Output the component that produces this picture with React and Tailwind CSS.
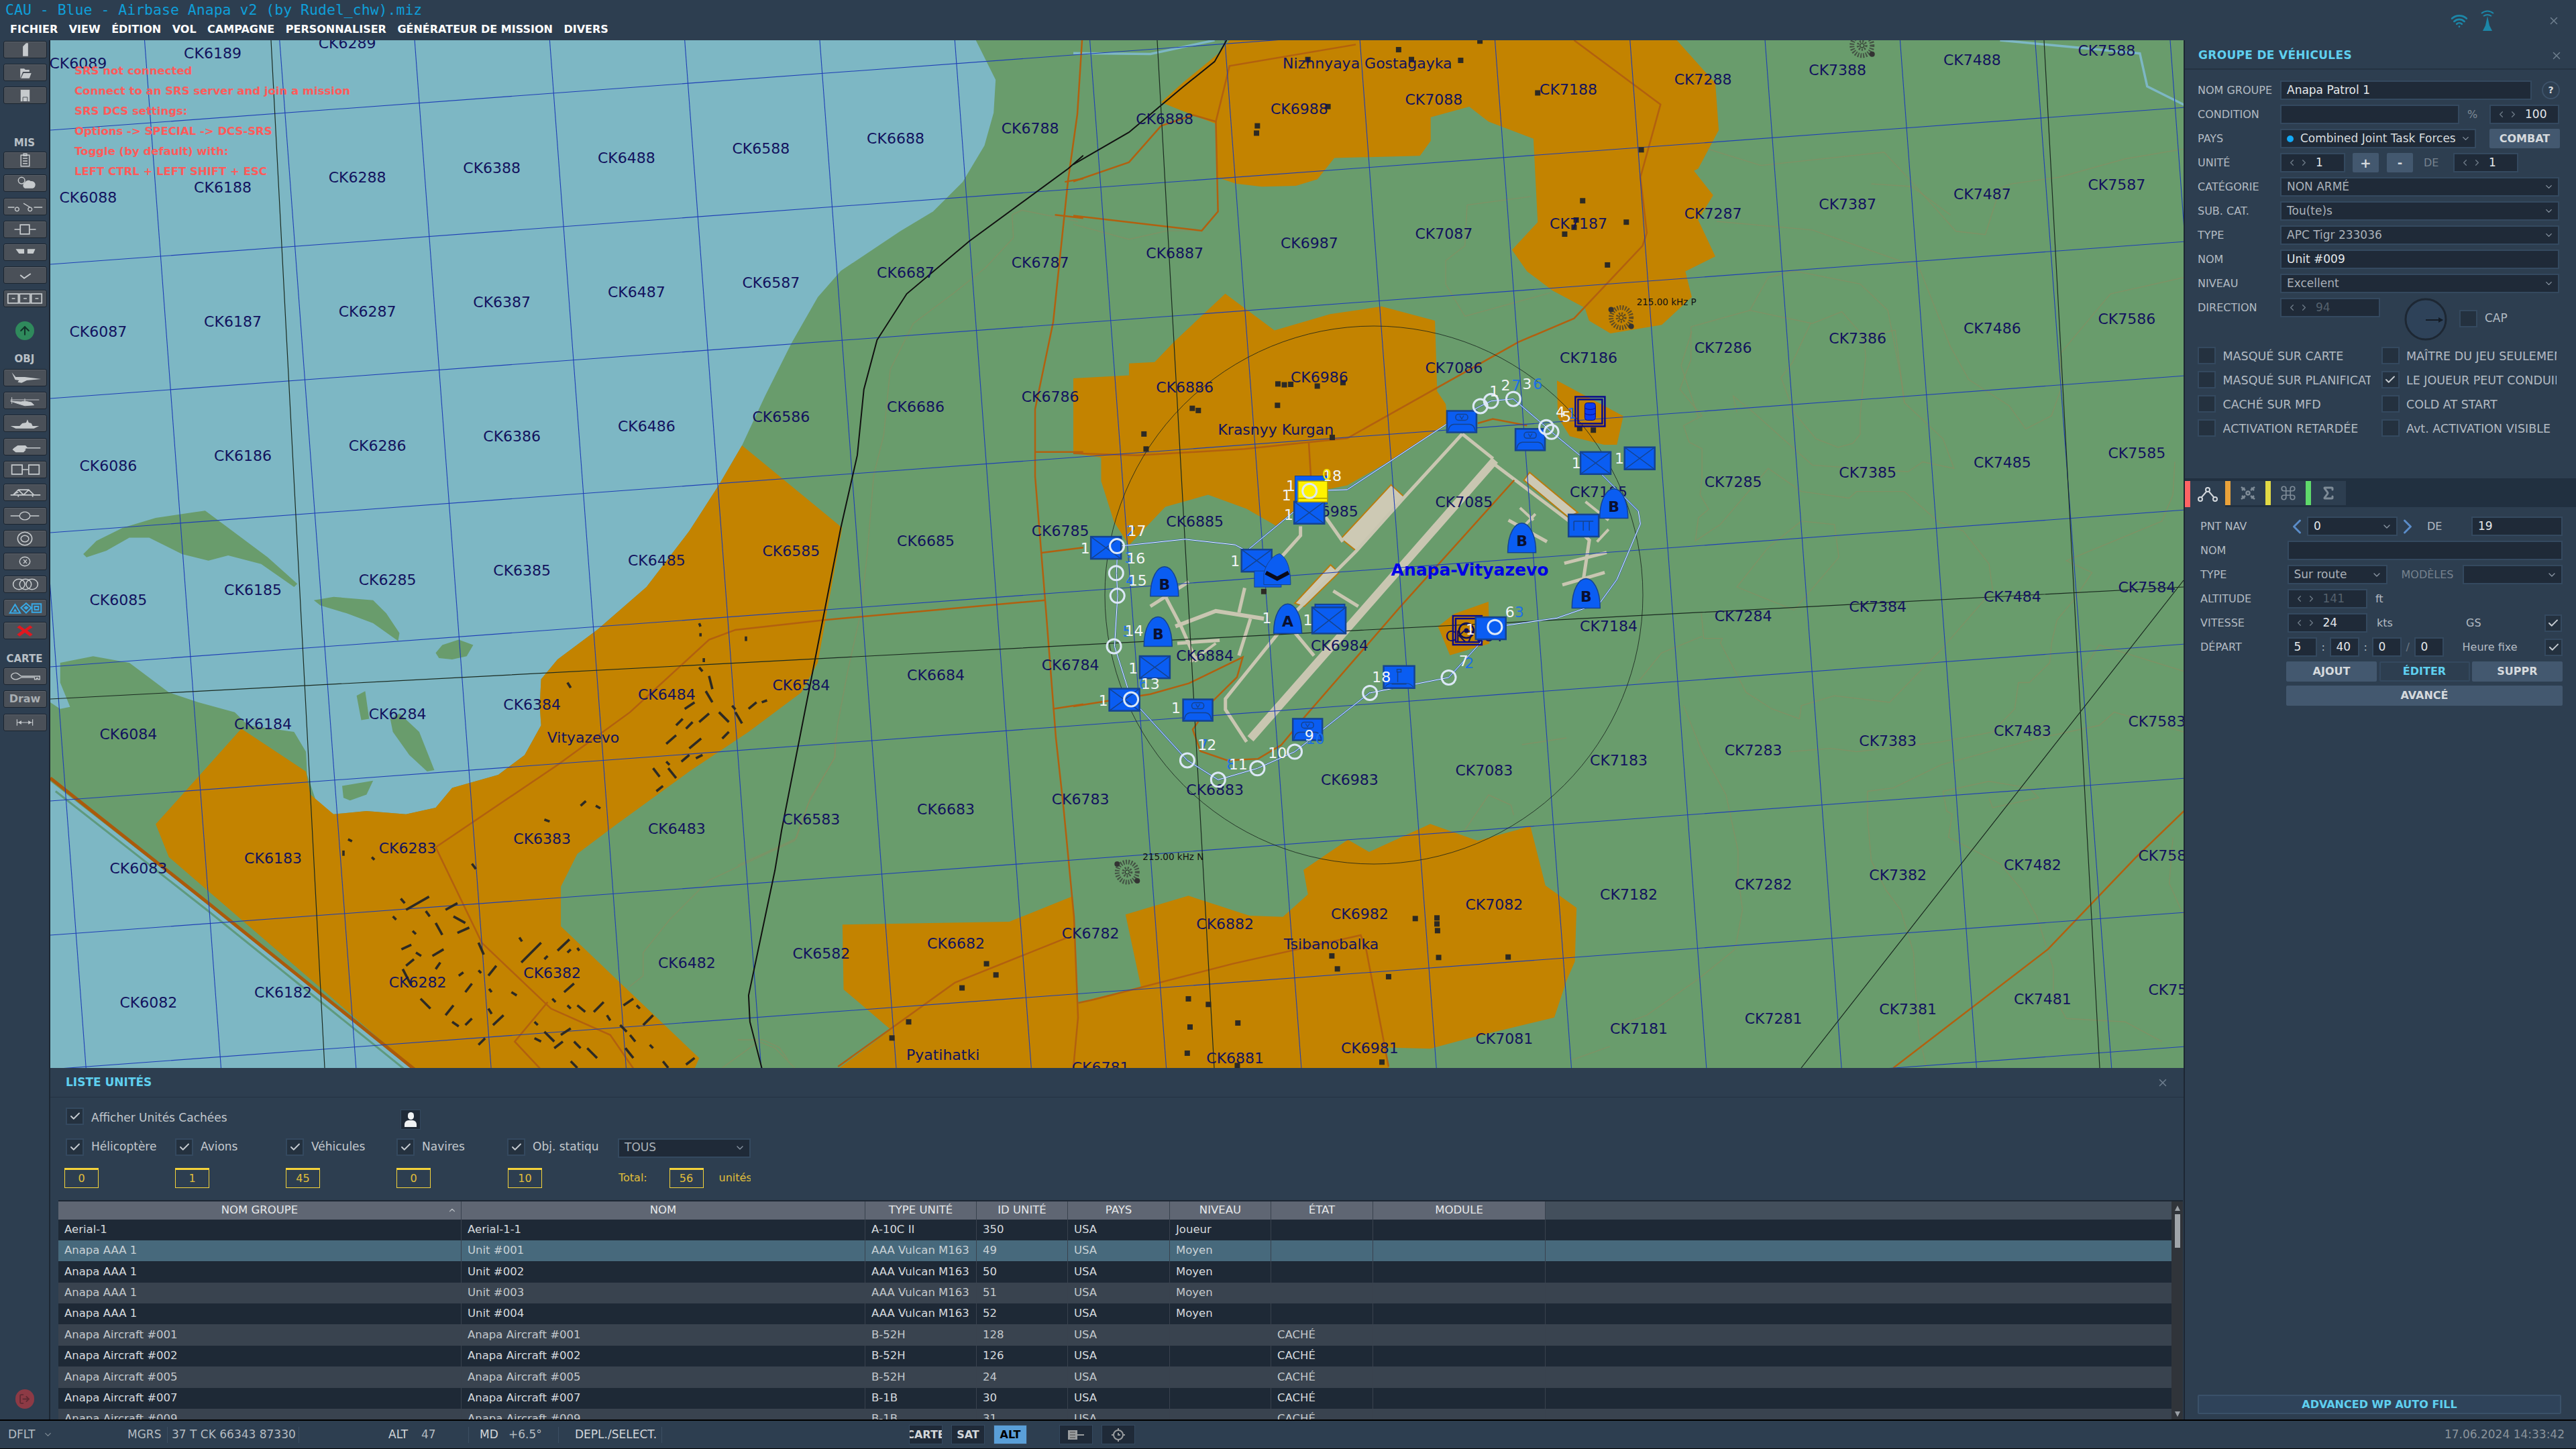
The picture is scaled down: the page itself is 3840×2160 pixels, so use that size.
import { Check, ChevronDown, ChevronLeft, ChevronRight, Command, Sigma, Wifi, X, ArrowUp, LogOut } from "lucide-react";

// zoom frames used to trace the map: [offsetX, offsetY, scaleX, scaleY]
const Z7 = [1600, 500, 0.574, 0.459];
const Z8 = [75, 60, 0.982, 0.982];
const Z9 = [1600, 60, 0.638, 0.638];
const Z10 = [1100, 1100, 0.829, 0.3333];
const Z11 = [2400, 60, 0.5485, 0.982];
const F = [0, 0, 1, 1];

const xy = (x, y, z) => [z[0] + x * z[2], z[1] + y * z[3]];
const P = (s, z) =>
  s
    .trim()
    .split(/\s+/)
    .map((p) => {
      const [x, y] = p.split(",").map(Number);
      return xy(x, y, z).join(",");
    })
    .join(" ");

const SEA = [
  ["0,0 1405,0 1435,60 1432,110 1418,160 1385,215 1340,260 1290,290 1200,350 1165,390 1125,460 1085,540 1050,615 1015,675 970,745 905,830 830,895 770,940 745,970 743,1010 745,1040 720,1085 680,1115 610,1135 585,1165 540,1175 480,1170 430,1175 405,1160 390,1115 388,1080 370,1050 300,1040 280,1020 225,1005 180,990 120,945 65,935 15,945 15,975 30,1012 15,1015 0,1005", Z8],
  ["0,1125 160,1250 240,1310 400,1440 560,1568 0,1568", Z8],
];
const ISLANDS = [
  "50,780 70,760 110,740 160,725 235,714 270,740 330,785 375,825 370,830 320,795 270,782 240,790 200,780 150,755 120,755 85,775 55,785",
  "400,850 430,845 490,850 510,870 530,900 528,912 490,885 450,870 410,858",
  "585,930 595,918 620,910 642,918 632,935 610,940 590,938",
  "465,995 478,988 484,1030 472,1032",
  "516,1030 530,1022 560,1050 583,1108 572,1110 545,1085 520,1050",
  "443,1132 490,1124 480,1145 455,1154 445,1150",
];
const ORANGE = [
  ["1050,615 1202,740 1165,945 1140,990 1060,1050 970,1110 860,1190 800,1235 775,1285 775,1345 985,1545 975,1568 560,1568 180,1240 160,1190 290,1045 388,1110 395,1145 430,1175 480,1170 540,1175 585,1165 610,1135 680,1115 720,1085 745,1040 743,1010 745,970 770,940 830,895 905,830 970,745 1015,675", Z8],
  ["188,835 488,822 602,708 612,1190 640,1165 725,1115 697,790 810,706 920,795 980,800 1025,700 1017,590 1097,455 1135,510 1245,385 1330,460 1425,395 1452,660 1508,760 1505,1000 1490,1085 1468,1250 1320,1340 1245,1390 1165,1385 1172,1500 170,1500 275,1305 190,1125", Z10],
  ["205,145 255,100 340,30 365,0 1410,0 1500,100 1508,210 1460,300 1450,305 1495,362 1460,420 1500,505 1430,540 1445,600 1375,665 1255,685 1205,655 1195,625 1120,585 1060,540 1025,490 1085,425 1075,230 970,190 925,155 835,180 835,235 810,270 610,275 570,325 520,340 440,342 380,335 335,320 333,195 280,175", Z9],
  ["0,790 130,783 130,755 190,752 235,705 355,592 470,678 600,640 720,622 845,655 850,820 870,850 875,895 745,980 640,1040 590,1050 520,1060 515,1100 475,1135 405,1095 315,1062 215,1090 130,1180 95,1125 65,1030 65,975 0,965", Z9],
  ["1130,795 1285,878 1270,945 1240,945 1160,925 1132,880", Z9],
  ["852,1370 890,1340 970,1312 972,1410 880,1437", Z9],
];
const CONTOURS = [
  ["265,165 410,190 745,170 820,215 940,290 1020,295 1060,225 1090,218 1220,208 1400,180 1560,165", Z11],
  ["710,218 820,222 925,265", Z11],
  ["290,275 550,288 840,345 925,465 975,515 1085,555 1130,590 1200,570 1225,530 1225,475 1300,425 1360,385 1560,360", Z11],
  ["220,435 220,485 190,530 250,570 200,585 215,610 250,620 250,665 245,690 268,712 240,725 232,760 300,735 430,650 520,685 650,695 670,685 800,685 890,730 960,745 1030,795 1040,835 900,925 760,1005 610,995 520,1010 515,1030 440,1015 370,990 300,915 305,908 255,908 248,870", Z11],
  ["430,360 380,410 220,435", Z11],
  ["380,410 550,430 630,412 690,450 775,440 800,550 905,605 935,650 850,640 810,655 550,645 390,565 335,540 345,565", Z11],
  ["430,360 500,350 680,370 755,410 790,510 800,550", Z11],
  ["545,430 495,490 465,512 500,565 560,605 620,618 660,612 680,598 680,570 695,480 690,450", Z11],
  ["520,730 610,735 622,785 500,865 345,830 430,770 520,730", Z11],
  ["200,1010 250,1080 315,1145 348,1230 348,1270 360,1320 340,1380 240,1425 100,1480 0,1500", Z11],
  ["490,1080 600,1075 670,1080 900,1065 1040,1050 1100,1015 1110,975 1140,975 1195,945 1200,915 1215,880 1260,850 1310,808 1240,790 1500,730 1530,690 1535,640", Z11],
  ["700,1140 700,1180 710,1245 750,1290 790,1320 825,1385 830,1440 840,1510 860,1560", Z11],
  ["700,1140 770,1135 900,1100 1160,1060 1330,1040 1370,1020 1560,1050", Z11],
  ["905,1140 1030,1125 1140,1135 1165,1150 1040,1165 1030,1150", Z11],
  ["905,1140 915,1170 930,1175 920,1210 1060,1250 1120,1290 1160,1330 1205,1410 1205,1450 1240,1485 1400,1490 1500,1520", Z11],
  ["1270,970 1330,918 1560,958", Z11],
  ["1530,1210 1520,1280 1560,1330", Z11],
  ["75,975 140,930 250,905", Z11],
  ["1460,265 1475,258 1560,275", Z8],
  ["1460,265 1462,300 1420,345 1370,385 1310,430 1275,500 1265,600 1250,660 1240,780 1230,870 1210,960 1195,1040 1190,1090 1150,1160 1130,1215 1000,1275 940,1335 900,1385 900,1420 875,1440", Z8],
  ["1020,1560 1075,1520 1100,1530 1130,1560", Z8],
  ["920,385 1070,365", Z9],
  ["920,385 915,480 870,515 870,570 915,645 1115,590", Z9],
  ["0,430 130,465 220,445 300,445", Z9],
  ["1445,680 1420,760 1460,880", Z9],
  ["175,0 175,85 130,270 105,450 0,570", Z10],
  ["1410,30 1490,0", Z10],
  ["1305,420 1350,255 1390,300 1395,345", Z10],
  ["1500,1440 1568,1380", Z10],
  ["0,1350 45,1350 75,1385 90,1440", Z10],
];
const ROADS = [
  ["1613,60 1606,170 1592,270 1570,480 1543,610 1543,710 1558,895 1574,1100 1585,1200 1601,1367 1607,1517 1600,1592", F],
  ["585,1225 770,1100 880,1020 1000,910 1040,895 1175,880 1510,850", Z8],
  ["585,1225 655,1370 760,1470 850,1510 890,1568", Z8],
  ["755,1460 705,1520 750,1568", Z8],
  ["180,1470 390,1095 590,895", Z10],
  ["612,1185 640,1170 890,1010 1120,882 1130,950 1170,1470", Z10],
  ["0,965 150,970 400,955 640,930 1040,705 1170,650 1330,480 1340,450 1325,320 1372,150 1170,0", Z9],
  ["0,330 130,285 205,200 280,175 333,190 365,60 660,10", Z9],
  ["333,190 338,400 300,445 0,410", Z9],
  ["550,940 555,1020", Z9],
  ["945,895 980,885 1060,900", Z9],
  ["1145,470 850,880 600,1240 540,1330 480,1375 400,1380 330,1350 310,1280 360,1190 425,1110 440,1045 300,1130 200,1165 0,1205", Z7],
  ["1495,625 1568,625", Z8],
  ["1505,778 1568,770", Z8],
  ["1522,1015 1568,1008", Z8],
  ["1525,265 1568,270", Z8],
  ["1540,215 1568,210", Z8],
  ["770,1560 1190,1380 1310,1310 1430,1240 1560,1170", Z11],
];
const BUILDINGS8 =
  "985,885 987,890;987,900 987,905;1056,905 1056,912;992,938 992,944;785,975 790,983;985,952 990,958;1000,965 1005,985;995,988 1005,1005;963,1015 978,1005;1015,1020 1030,1035;1040,1020 1050,1037;1000,1022 985,1035;1060,1015 1072,1005;1080,1005 1088,1002;950,1040 960,1030;935,1068 950,1055;965,1045 975,1035;970,1075 988,1060;1020,1060 1030,1050;915,1105 925,1118;938,1105 950,1120;935,1095 940,1100;958,1095 970,1085;980,1090 990,1085;920,1140 930,1132;805,1162 813,1155;828,1162 835,1166;750,1183 758,1186;445,1230 445,1238;452,1213 458,1216;488,1240 492,1244;640,1250 646,1258;1035,1010 1040,1016;532,1303 538,1310;540,1320 575,1300;600,1320 618,1310;520,1330 525,1335;570,1322 576,1330;612,1330 630,1340;585,1340 595,1358;618,1355 636,1347;550,1352 555,1357;533,1380 548,1373;580,1390 597,1380;555,1385 563,1390;650,1370 658,1388;585,1410 592,1400;540,1405 552,1395;535,1410 548,1435;620,1420 627,1415;650,1412 654,1416;665,1420 677,1405;630,1445 640,1432;666,1440 670,1445;600,1480 612,1465;562,1455 577,1470;665,1470 670,1478;610,1490 620,1497;630,1495 640,1485;650,1525 660,1515;672,1495 688,1480;700,1445 708,1450;712,1362 716,1368;715,1400 745,1370;750,1395 755,1390;770,1382 788,1365;785,1385 790,1380;800,1378 803,1382;762,1455 767,1460;780,1445 795,1432;785,1465 790,1470;800,1465 812,1475;825,1475 840,1460;845,1480 850,1488;870,1465 885,1455;890,1465 895,1470;900,1495 915,1480;865,1495 875,1505;880,1510 888,1520;873,1530 885,1545;910,1525 915,1530;930,1550 938,1560;965,1555 978,1545;735,1490 740,1495;750,1505 765,1520;775,1510 790,1500;765,1530 778,1520;795,1520 805,1530;815,1530 830,1545;735,1515 745,1520;790,1550 800,1560";
const BLOCKS = [
  [Z9, "760,22 950,2 905,47 790,45 548,45 595,155 430,200 428,217 1085,123 1327,256 1190,375 1175,420 1170,437 1148,453 1292,425 1248,525 478,803 493,805 508,804 570,808 630,800 477,853 278,860 292,865 165,920 170,955 605,928 1183,907 1215,911 445,1288"],
  [Z10, "447,1010 464,1060 403,1118 307,1270 277,1342 1068,975 1078,1033 1218,808 1257,805 1257,832 1258,862 1260,982 1385,980 1170,1068 810,1167 846,1192 813,1293 899,1275 808,1410 898,1465 1158,1450"],
];
const AIRFIELD = [
  ["1095,405 460,1310", 12],
  ["1010,320 1090,400", 5],
  ["1010,320 860,525 735,700 575,900 395,1180 395,1215 450,1320", 5],
  ["1095,420 1190,510 1285,600 1340,665 1325,790", 5],
  ["590,620 590,650 540,720", 5],
  ["655,590 700,670", 5],
  ["495,920 370,895 265,945", 6],
  ["445,820 430,900", 5],
  ["240,850 280,945 320,1060", 5],
  ["200,880 300,800", 5],
  ["460,920 430,1040", 5],
  ["270,1000 380,990", 5],
  ["305,1060 370,1000", 4],
  ["675,830 740,880", 5],
  ["575,965 625,1040", 5],
  ["1130,600 1230,670", 5],
  ["1160,560 1195,600", 4],
  ["1170,620 1200,580", 4],
  ["1275,740 1385,705", 5],
  ["1270,810 1380,770", 5],
  ["1330,540 1390,600", 4],
  ["1360,670 1390,630", 4],
];
const APRONS = [
  "825,485 860,525 735,700 695,660",
  "668,745 690,770 600,880 575,870",
  "1185,445 1310,575 1285,590 1170,470",
];
const ROUTE9 = "552,1053 640,1050 875,895 951,855 976,843 1028,838 1105,904 1117,915 1220,1000 1320,1100 1325,1130 1270,1260 1230,1315 1130,1350 985,1371 877,1489 693,1525";
const ROUTE7 = "770,1160 575,1352 478,1406 376,1443 296,1380 150,1180 107,1010 115,845 112,772 115,685 290,662 420,680 450,700 575,570 615,505";
const WAYPOINTS = [
  [Z9, "951,855 976,843 1028,838 1105,904 1117,915 102,1182 100,1245 103,1298 95,1416 135,1540 552,1053 985,1371 877,1489 693,1525"],
  [Z7, "296,1380 376,1443 478,1406 575,1352"],
];
const WHITE_NUMS = [
  ["17", 148, 1146, Z9], ["16", 146, 1210, Z9], ["15", 150, 1262, Z9], ["14", 142, 1380, Z9], ["13", 180, 1503, Z9],
  ["1", 28, 1187, Z9], ["1", 378, 1216, Z9], ["1", 503, 1108, Z9], ["1", 498, 1062, Z9], ["1", 508, 1040, Z9], ["1", 452, 1350, Z9],
  ["1", 548, 1355, Z9], ["1", 928, 1376, Z9], ["1", 1175, 988, Z9], ["1", 1276, 977, Z9], ["1", 140, 1467, Z9], ["1", 70, 1542, Z9], ["1", 240, 1560, Z9],
  ["12", 347, 1328, Z7], ["11", 428, 1393, Z7], ["10", 530, 1355, Z7], ["9", 613, 1298, Z7], ["18", 800, 1108, Z7], ["18", 605, 1017, Z9],
  ["7", 912, 1450, Z9], ["6", 1020, 1335, Z9], ["1", 983, 820, Z9], ["2", 1010, 805, Z9], ["3", 1060, 803, Z9], ["4", 1138, 868, Z9], ["5", 1152, 880, Z9],
];
const BLUE_NUMS = [
  ["2", 925, 1455, Z9], ["3", 1042, 1335, Z9], ["7", 1035, 805, Z9], ["6", 1085, 803, Z9], ["1", 1165, 872, Z9],
  ["8", 410, 1393, Z7], ["7", 338, 1328, Z7], ["10", 628, 1310, Z7], ["2", 150, 635, Z7], ["3", 145, 722, Z7], ["4", 148, 795, Z7], ["5", 140, 960, Z7], ["6", 182, 1130, Z7],
];

const gridLabel = (e, n) => ({
  text: `CK${e}${n}`,
  x: 332 + (e - 61) * 200.6 + (88 - n) * 15,
  y: 279 - (e - 61) * 14.6 + (88 - n) * 200,
});
const GRID_LABELS = [];
for (let e = 60; e <= 76; e++)
  for (let n = 81; n <= 89; n++) {
    const l = gridLabel(e, n);
    // only squares that reach into the visible map
    if (l.x > 30 && l.x < 3300 && l.y > 45 && l.y < 1602) GRID_LABELS.push(l);
  }
const V_LINES = Array.from({ length: 17 }, (_, i) => 215.5 + 201.3 * (i - 1));
const H_LINES = Array.from({ length: 10 }, (_, j) => 194 + 200 * (j - 1) + 0);

const BLUE = "#0a5df2";
const DARK = "#15438f";

const BoxX = ({ x, y, z = Z9, w = 45, h = 33 }) => {
  const [a, b] = xy(x, y, z);
  return (
    <g transform={`translate(${a} ${b})`}>
      <rect width={w} height={h} fill={BLUE} stroke={DARK} strokeWidth="2.5" />
      <path d={`M0 0L${w} ${h}M${w} 0L0 ${h}`} stroke={DARK} strokeWidth="1.5" />
    </g>
  );
};
const BoxV = ({ x, y, z = Z9 }) => {
  const [a, b] = xy(x, y, z);
  return (
    <g transform={`translate(${a} ${b})`}>
      <rect width="44" height="32" fill={BLUE} stroke={DARK} strokeWidth="2.5" />
      <rect x="13" y="5" width="18" height="9" rx="4" fill="none" stroke={DARK} strokeWidth="1.5" />
      <path d="M19 7l3 5 3-5" fill="none" stroke={DARK} strokeWidth="1.2" />
      <path d="M2 30q1-9 8-10h24q7 1 8 10" fill="none" stroke={DARK} strokeWidth="1.5" />
    </g>
  );
};
const Dome = ({ x, y, letter }) => {
  const [a, b] = xy(x, y, Z9);
  return (
    <g transform={`translate(${a} ${b})`}>
      <path d="M0 44C0 15 11 0 21 0S42 15 42 44Z" fill={BLUE} stroke={DARK} strokeWidth="1.5" />
      <text x="21" y="34" textAnchor="middle" fontSize="22" fontWeight="700" fill="#0a1030">{letter}</text>
    </g>
  );
};
const Ndb = ({ x, y, z, label }) => {
  const [a, b] = xy(x, y, z);
  return (
    <g transform={`translate(${a} ${b})`}>
      <circle r="15" fill="none" stroke="#333" strokeWidth="7" strokeDasharray="2 2" opacity=".7" />
      <circle r="6" fill="none" stroke="#333" strokeWidth="4" strokeDasharray="2 2" opacity=".7" />
      <circle r="3" fill="none" stroke="#222" strokeWidth="1" />
      <circle cx="-15" cy="-12" r="4" fill="#333" />
      <circle cx="15" cy="13" r="4" fill="#333" />
      {label && <text x="23" y="-18" fontSize="13.5" fill="#111">{label}</text>}
    </g>
  );
};

const MapDrawing = () => (
  <svg viewBox="75 60 3180 1532" className="block w-full h-full">
    <rect x="75" y="60" width="3180" height="1532" fill="#699c6c" />
    {SEA.map(([s, z], i) => <polygon key={i} points={P(s, z)} fill="#7db7c4" />)}
    {ISLANDS.map((s, i) => <polygon key={i} points={P(s, Z8)} fill="#699c6c" />)}
    {ORANGE.map(([s, z], i) => <polygon key={i} points={P(s, z)} fill="#c38300" />)}
    {CONTOURS.map(([s, z], i) => <polyline key={i} points={P(s, z)} fill="none" stroke="#8d8a60" strokeWidth="1.4" opacity=".6" />)}
    {/* rivers */}
    <polyline points={P("0,30 180,32 330,0", Z9)} fill="none" stroke="#7db7c4" strokeWidth="3.5" />
    <polyline points={P("1060,0 1440,20 1460,70 1560,98", Z11)} fill="none" stroke="#7db7c4" strokeWidth="3.5" />
    {/* airfield */}
    {APRONS.map((s, i) => <polygon key={i} points={P(s, Z7)} fill="#cdc9b4" stroke="#b87c10" strokeWidth="2" />)}
    {AIRFIELD.map(([s, w], i) => <polyline key={i} points={P(s, Z7)} fill="none" stroke="#c9c6b1" strokeWidth={w} />)}
    {/* roads */}
    {ROADS.map(([s, z], i) => <polyline key={i} points={P(s, z)} fill="none" stroke="#b2600f" strokeWidth="2.5" />)}
    <polyline points={P("8,1140 240,1322 545,1568", Z8)} fill="none" stroke="#5f9a7e" strokeWidth="3" />
    <polyline points={P("0,1120 240,1310 560,1568", Z8)} fill="none" stroke="#ab5a0a" strokeWidth="5" />
    {V_LINES.map((x, i) => <line key={i} x1={x} y1="60" x2={x + 114} y2="1592" stroke="#1e3fb5" strokeWidth="1.1" />)}
    {H_LINES.map((y, j) => <line key={j} x1="75" y1={y} x2="3255" y2={y - 233.7} stroke="#1e3fb5" strokeWidth="1.1" />)}
    {/* rail and zone lines */}
    <polyline points={P("1082,1568 1062,1490 1060,1450 1100,1260 1110,1200 1200,740 1225,630 1235,530 1255,455 1300,385 1395,305 1545,195 1568,175", Z8)} fill="none" stroke="#111" strokeWidth="2" />
    <polyline points={P("0,290 130,215 255,110 330,50 358,0", Z9)} fill="none" stroke="#111" strokeWidth="2" />
    <path d="M404 60L484 1592M1725 60L1810 1592M3047 60L3130 1592M75 1042L3255 875M2685 1592L3255 865" stroke="#1a2a20" strokeWidth="1.2" />
    <circle cx="2048" cy="887" r="401" fill="none" stroke="#15201a" strokeWidth="0.8" />
    {/* buildings */}
    {BUILDINGS8.split(";").map((s, i) => {
      const [p, q] = s.split(" ");
      return <polyline key={i} points={P(`${p} ${q}`, Z8)} fill="none" stroke="#2c2a24" strokeWidth="3.6" />;
    })}
    {BLOCKS.map(([z, s], i) =>
      s.split(" ").map((p, k) => {
        const [x, y] = p.split(",").map(Number);
        const [a, b] = xy(x, y, z);
        return <rect key={`${i}-${k}`} x={a - 4} y={b - 4} width="8" height="8" fill="#2c2a24" />;
      })
    )}
    {GRID_LABELS.map((l) => (
      <text key={l.text} x={l.x} y={l.y + 8} textAnchor="middle" fontSize="22" fill="#12125e">{l.text}</text>
    ))}
    {[
      ["Nizhnyaya Gostagayka", 687, 66, Z9],
      ["Krasnyy Kurgan", 473, 922, Z9],
      ["Vityazevo", 809, 1066, Z8],
      ["Pyatihatki", 1355, 1548, Z8],
      ["Tsibanobalka", 1067, 945, Z10],
    ].map(([t, x, y, z]) => {
      const [a, b] = xy(x, y, z);
      return <text key={t} x={a} y={b} textAnchor="middle" fontSize="22" fill="#12125e">{t}</text>;
    })}
    <text x="2191" y="858" textAnchor="middle" fontSize="25" fontWeight="700" fill="#0000e6">Anapa-Vityazevo</text>
    <Ndb x={1280} y={648} z={Z9} label="215.00 kHz P" />
    <Ndb x={700} y={600} z={Z10} label="215.00 kHz N" />
    <Ndb x={685} y={8} z={Z11} />
    {/* route */}
    <polyline points={`${P(ROUTE9, Z9)} ${P(ROUTE7, Z7)}`} fill="none" stroke="#1d57c8" strokeWidth="2" />
    <polyline points={`${P(ROUTE9, Z9)} ${P(ROUTE7, Z7)}`} fill="none" stroke="#fff" strokeWidth="1" />
    {/* units */}
    <BoxX x={41} y={1160} />
    <BoxX x={393} y={1190} />
    <rect {...{ x: 1600 + 518 * 0.638, y: 60 + 1018 * 0.638, width: 48, height: 42, fill: BLUE, stroke: DARK }} />
    <BoxX x={516} y={1078} />
    <BoxX x={1185} y={962} />
    <BoxX x={1288} y={951} />
    <BoxX x={155} y={1439} />
    <BoxX x={84} y={1515} />
    <rect x={1600 + 565 * 0.638} y={60 + 1318 * 0.638} width="44" height="20" fill={BLUE} stroke={DARK} strokeWidth="2" />
    <BoxX x={558} y={1325} w={50} h={39} />
    <BoxV x={873} y={866} />
    <BoxV x={1033} y={908} />
    <BoxV x={285} y={1182} z={Z7} />
    <BoxV x={570} y={1245} z={Z7} />
    <g transform={`translate(${1600 + 1157 * 0.638} ${60 + 1108 * 0.638})`}>
      <rect width="45" height="33" fill={BLUE} stroke={DARK} strokeWidth="2.5" />
      <path d="M8 10H37M8 10V24M22 10V24M31 10V24" fill="none" stroke={DARK} strokeWidth="1.5" />
    </g>
    <g transform={`translate(${1600 + 725 * 0.638} ${60 + 1462 * 0.638})`}>
      <rect width="46" height="33" fill={BLUE} stroke={DARK} strokeWidth="2.5" />
      <path d="M20 5h6v4h-6zM21 9v15M12 27h22" fill="none" stroke={DARK} strokeWidth="1.5" />
      <path d="M2 31q4-5 10-5h22q6 0 10 5" fill="none" stroke={DARK} strokeWidth="1.2" />
    </g>
    <Dome x={1015} y={1128} letter="B" />
    <Dome x={1230} y={1048} letter="B" />
    <Dome x={1165} y={1258} letter="B" />
    <Dome x={180} y={1230} letter="B" />
    <Dome x={165} y={1347} letter="B" />
    <Dome x={468} y={1317} letter="A" />
    <rect x={1600 + 423 * 0.638} y={60 + 1240 * 0.638} width="40" height="24" fill={BLUE} stroke={DARK} />
    <g transform={`translate(${1600 + 445 * 0.638} ${60 + 1200 * 0.638})`}>
      <path d="M0 46V30C4 10 18 0 24 0C34 6 40 20 40 46Z" fill={BLUE} stroke={DARK} />
      <path d="M3 28l17 9 17-9" fill="none" stroke="#0a0a1a" strokeWidth="6" />
    </g>
    <rect x={1600 + 525 * 0.638} y={60 + 1030 * 0.638} width="44" height="31" fill="#fff200" stroke="#b09c00" strokeWidth="1.5" />
    <line x1={1600 + 525 * 0.638} y1={60 + 1070 * 0.638} x2={1600 + 593 * 0.638} y2={60 + 1070 * 0.638} stroke="#b09c00" strokeWidth="1.5" />
    {/* fuel depot */}
    <g transform={`translate(${1600 + 1173 * 0.638} ${60 + 833 * 0.638})`}>
      <rect width="44" height="44" fill="none" stroke="#0a0a8c" strokeWidth="2.5" />
      <rect x="4" y="4" width="36" height="36" fill="none" stroke="#0a0a8c" strokeWidth="2.5" />
      <rect x="14" y="9" width="16" height="26" rx="4" fill="#0a3cf0" stroke="#0a0a8c" strokeWidth="1" />
      <path d="M14 17q8 4 16 0M14 25q8 4 16 0" fill="none" stroke="#0a0a8c" strokeWidth="1" />
    </g>
    <g transform={`translate(${1600 + 887 * 0.638} ${60 + 1345 * 0.638})`}>
      <rect width="43" height="43" fill="none" stroke="#0a0a8c" strokeWidth="2.5" />
      <rect x="4" y="4" width="35" height="35" fill="none" stroke="#0a0a8c" strokeWidth="2.5" />
      <circle cx="20" cy="22" r="11" fill="none" stroke="#0a0a5c" strokeWidth="2.5" />
      <circle cx="20" cy="22" r="3.5" fill="#0a0a5c" />
    </g>
    <rect x={1600 + 940 * 0.638} y={60 + 1348 * 0.638} width="45" height="33" fill={BLUE} stroke={DARK} strokeWidth="2.5" />
    {/* waypoints */}
    {WAYPOINTS.map(([z, s], i) =>
      s.split(" ").map((p, k) => {
        const [x, y] = p.split(",").map(Number);
        const [a, b] = xy(x, y, z);
        return <circle key={`${i}-${k}`} cx={a} cy={b} r="10.5" fill="none" stroke="#dce8f7" strokeWidth="3" />;
      })
    )}
    {BLUE_NUMS.map(([t, x, y, z], i) => {
      const [a, b] = xy(x, y, z);
      return <text key={i} x={a} y={b + 8} textAnchor="middle" fontSize="22" fill="#1d6fe8">{t}</text>;
    })}
    {WHITE_NUMS.map(([t, x, y, z], i) => {
      const [a, b] = xy(x, y, z);
      return <text key={i} x={a} y={b + 8} textAnchor="middle" fontSize="22" fill="#f2f5f7">{t}</text>;
    })}
    <text x={1600 + 592 * 0.638} y={60 + 1027 * 0.638} textAnchor="middle" fontSize="22" fill="#f5e400">0</text>
  </svg>
);

const TOOL_ICONS = {
  clip: <path d="M26 5h13v17H26zM30 3h5v3h-5zM29 10h7M29 14h7M29 18h7" fill="none" stroke="currentColor" strokeWidth="1.5" />,
  cloud: <g><circle cx="27" cy="9" r="5" fill="none" stroke="currentColor" strokeWidth="1.5" /><path d="M32 21a5 5 0 0 1 0-9 6 6 0 0 1 9-2 5 5 0 0 1 3 11z" fill="currentColor" /></g>,
  switch: <path d="M6 14h10M24 14h0M20 14a3 3 0 1 0 .01 0M30 8l10 6M40 14a3 3 0 1 0 .01 0M46 14h13" fill="none" stroke="currentColor" strokeWidth="1.4" />,
  waypoint: <path d="M16 13h8M25 6h14v14H25zM40 13h9" fill="none" stroke="currentColor" strokeWidth="1.8" />,
  flags: <path d="M18 8h13v7h-8zM34 6v16M30 6v16M36 8h12l-3 7h-9z" fill="currentColor" />,
  check: <path d="M25 13l6 5 10-7" fill="none" stroke="currentColor" strokeWidth="2" />,
  triple: <path d="M6 6h16v14H6zM24 6h16v14H24zM42 6h16v14H42zM12 13h5M30 13h5M48 13h5" fill="none" stroke="currentColor" strokeWidth="1.8" />,
  plane: <path d="M12 5l6 7h14l25 3-22 2-8 4-6-1 2-3-6-1z" fill="currentColor" />,
  helo: <path d="M10 12h44M32 10v4M12 8v10M10 14l16 1 6-1 10 2 4 4-14 1-10-3z" fill="currentColor" stroke="currentColor" strokeWidth="1" />,
  ship: <path d="M10 17h44l-8 4H18zM24 17l4-4 6-1 2-5 2 5 4 1 2 4z" fill="currentColor" />,
  tank: <path d="M15 15l6-4h12l3 3h20v1.5H34l-2 2h2l-4 4H18l-5-4z" fill="currentColor" />,
  sam: <path d="M12 6h16v14H12zM28 13h10M38 6h16v14H38z" fill="none" stroke="currentColor" strokeWidth="1.8" />,
  bridge: <path d="M10 17h46M14 17l8-8 8 8 8-8 8 8M22 9h16M14 17l4-3 4-1M22 20v-3M44 20v-3" fill="none" stroke="currentColor" strokeWidth="1.8" />,
  node: <path d="M10 13h14M24 13a8 6 0 1 0 16 0a8 6 0 1 0-16 0M40 13h14" fill="none" stroke="currentColor" strokeWidth="1.4" />,
  target: <path d="M21 13a11 10 0 1 0 22 0a11 10 0 1 0-22 0M26 13a6 5 0 1 0 12 0a6 5 0 1 0-12 0" fill="none" stroke="currentColor" strokeWidth="1.6" />,
  xcircle: <path d="M24 13a8 7 0 1 0 16 0a8 7 0 1 0-16 0M30 10l5 6M35 10l-5 6" fill="none" stroke="currentColor" strokeWidth="1.4" />,
  rings: <path d="M14 13a9 8 0 1 0 18 0a9 8 0 1 0-18 0M24 13a9 8 0 1 0 18 0a9 8 0 1 0-18 0M34 13a9 8 0 1 0 18 0a9 8 0 1 0-18 0" fill="none" stroke="currentColor" strokeWidth="1.6" />,
  shapes: <g fill="none" strokeWidth="2"><path d="M9 21l8-13 8 13z" stroke="#38a9e6" /><path d="M14 19l3-5 3 5z" fill="#38a9e6" /><path d="M26 13l8-7 8 7-8 8z" stroke="#38a9e6" /><path d="M30 13l4-3 4 3-4 3z" fill="#38a9e6" /><path d="M43 7h14v13H43z" stroke="#38a9e6" /><path d="M47 11h6v5h-6z" stroke="#38a9e6" /></g>,
  redx: <path d="M24 5l8 6 8-6 4 3-8 5 8 6-4 3-8-6-8 6-4-3 8-6-8-5z" fill="#e01820" />,
  key: <path d="M18 8a7 5 0 1 0 0 10c4 0 7-3 9-3h20v3h3v-2h2v2h3v-5H27c-2 0-5-5-9-5z" fill="none" stroke="currentColor" strokeWidth="1.4" />,
  ruler: <path d="M20 8v10M44 8v10M20 13h24M23 13l3-2v4zM41 13l-3-2v4z" fill="currentColor" stroke="currentColor" strokeWidth="1.2" />,
  doc: <path d="M30 7l4-4h3v20h-8V8z" fill="currentColor" />,
  open: <path d="M25 7h6l2 2h6v3H29l-4 10zM26 22l4-8h12l-3 8z" fill="currentColor" />,
  save: <path d="M25 4h15v19H25zM29 16h7v7h-7z" fill="currentColor" stroke="#4a5058" strokeWidth="1" />,
};

const Tool = ({ icon, text }) => (
  <div className="w-[65px] h-[26px] mx-[4.5px] rounded-[3px] bg-[#4a5058] border border-[#1b2530] flex items-center justify-center text-[#c6cacd] shadow-[inset_0_1px_0_#5a6068] shrink-0">
    {text ? (
      <span className="text-[16px] font-bold text-[#a9aeb2]">{text}</span>
    ) : (
      <svg viewBox="0 0 65 26" className="w-[65px] h-[26px]">{TOOL_ICONS[icon]}</svg>
    )}
  </div>
);

const LeftToolbar = () => (
  <div className="w-[75px] shrink-0 border-r-2 border-[#1d2733] flex flex-col relative">
    <div className="flex flex-col gap-[8px] pt-px">
      <Tool icon="doc" />
      <Tool icon="open" />
      <Tool icon="save" />
    </div>
    <div className="h-[26px] mt-[45px] text-center text-[15px] font-bold text-[#b9c0c6] leading-[26px]">MIS</div>
    <div className="flex flex-col gap-[8.3px]">
      {["clip", "cloud", "switch", "waypoint", "flags", "check", "triple"].map((i) => <Tool key={i} icon={i} />)}
    </div>
    <div className="mt-[21px] mx-auto w-[28px] h-[28px] rounded-full bg-[#2f8a5c] flex items-center justify-center text-[#12332a]">
      <ArrowUp size={20} strokeWidth={2.5} />
    </div>
    <div className="h-[22px] mt-[17px] text-center text-[15px] font-bold text-[#b9c0c6] leading-[22px]">OBJ</div>
    <div className="flex flex-col gap-[8.3px] mt-[4px]">
      {["plane", "helo", "ship", "tank", "sam", "bridge", "node", "target", "xcircle", "rings", "shapes", "redx"].map((i) => <Tool key={i} icon={i} />)}
    </div>
    <div className="h-[22px] mt-[18px] text-center text-[15px] font-bold text-[#b9c0c6] leading-[22px]">CARTE</div>
    <div className="flex flex-col gap-[8.3px] mt-[2px]">
      <Tool icon="key" />
      <Tool text="Draw" />
      <Tool icon="ruler" />
    </div>
    <div className="mt-auto mb-[16px] mx-auto w-[28px] h-[29px] rounded-full bg-[#8d3a45] flex items-center justify-center text-[#5f2a33]">
      <LogOut size={17} strokeWidth={2.5} />
    </div>
  </div>
);

const Box = ({ className = "", dim, children }) => (
  <div className={`h-full flex items-center border-2 border-[#34495f] bg-[#1f2a38] pl-2 text-[17px] whitespace-nowrap overflow-hidden ${dim ? "text-[#aab1b8]" : "text-[#e4e7ea]"} ${className}`}>
    {children}
  </div>
);
const Spin = ({ className, value, faded }) => (
  <Box className={`pl-1 ${className}`}>
    <ChevronLeft size={15} className="text-[#6f7c89] shrink-0" />
    <ChevronRight size={15} className="text-[#6f7c89] ml-[3px] shrink-0" />
    <span className={`ml-[10px] ${faded ? "text-[#55616d]" : ""}`}>{value}</span>
  </Box>
);
const Sel = ({ className, value, dim = true, small }) => (
  <Box dim={dim} className={`justify-between pr-[6px] ${className}`}>
    <span>{value}</span>
    <ChevronDown size={small ? 16 : 15} className="text-[#8a96a3] shrink-0" />
  </Box>
);
const Btn = ({ className = "", children }) => (
  <div className={`h-full flex items-center justify-center bg-[#43586f] font-bold text-[#d6dadd] rounded-[2px] ${className}`}>{children}</div>
);
const Chk = ({ on, className = "w-[27px] h-[26px]" }) => (
  <div className={`${className} shrink-0 bg-[#24313f] border-2 border-[#34495f] flex items-center justify-center text-[#c6ccd1]`}>
    {on && <Check size={18} strokeWidth={2.5} />}
  </div>
);

const Row1 = ({ label, children }) => (
  <div className="flex items-center h-[29px]">
    <span className="w-[123px] shrink-0 text-[16px] text-[#b3bbc3]">{label}</span>
    {children}
  </div>
);
const Row2 = ({ label, children }) => (
  <div className="flex items-center h-[29px]">
    <span className="w-[129.5px] shrink-0 text-[16px] text-[#b3bbc3]">{label}</span>
    {children}
  </div>
);
const CheckLine = ({ label, on, w }) => (
  <div className="flex items-center h-[26px] min-w-0">
    <Chk on={on} />
    <span className={`ml-[10.5px] mt-[3px] text-[17.5px] text-[#b3bbc3] whitespace-nowrap overflow-hidden ${w}`}>{label}</span>
  </div>
);

const RightPanel = () => (
  <div className="w-[585px] shrink-0 border-l-2 border-[#1d2733] flex flex-col">
    <div className="h-[44px] border-b-2 border-[#243342] flex items-center justify-between pl-[20px] pr-[20px] pt-[3px] shrink-0">
      <span className="text-[17px] font-bold text-[#5fd0ef] tracking-[0.3px]">GROUPE DE VÉHICULES</span>
      <X size={18} className="text-[#6f7f8f]" />
    </div>
    <div className="pl-[19px] pt-[16px] flex flex-col gap-[7px]">
      <Row1 label="NOM GROUPE">
        <Box className="w-[375px]">Anapa Patrol 1</Box>
        <div className="ml-[15px] w-[27px] h-[27px] rounded-full border-2 border-[#3d5269] flex items-center justify-center text-[14px] font-bold text-[#d8dcdf]">?</div>
      </Row1>
      <Row1 label="CONDITION">
        <Box className="w-[267px]" />
        <span className="ml-[12px] w-[33px] text-[16px] text-[#7f8b96]">%</span>
        <Spin className="w-[104px]" value="100" />
      </Row1>
      <Row1 label="PAYS">
        <Box className="w-[292px] pr-[6px]">
          <span className="w-[10px] h-[10px] rounded-full bg-[#12a8f5] shrink-0" />
          <span className="ml-[10px] flex-1 text-[#d8dcdf]">Combined Joint Task Forces</span>
          <ChevronDown size={15} className="text-[#8a96a3]" />
        </Box>
        <Btn className="ml-[20px] w-[105px] text-[16px]">COMBAT</Btn>
      </Row1>
      <Row1 label="UNITÉ">
        <Spin className="w-[97px]" value="1" />
        <Btn className="ml-[11px] w-[39px] text-[20px]">+</Btn>
        <Btn className="ml-[12px] w-[39px] text-[18px]">-</Btn>
        <span className="ml-[16px] w-[44px] text-[16px] text-[#76828e]">DE</span>
        <Spin className="w-[97px]" value="1" />
      </Row1>
      <Row1 label="CATÉGORIE"><Sel className="w-[416px]" value="NON ARMÉ" /></Row1>
      <Row1 label="SUB. CAT."><Sel className="w-[416px]" value="Tou(te)s" /></Row1>
      <Row1 label="TYPE"><Sel className="w-[416px]" value="APC Tigr 233036" /></Row1>
      <Row1 label="NOM"><Box className="w-[416px]">Unit #009</Box></Row1>
      <Row1 label="NIVEAU"><Sel className="w-[416px]" value="Excellent" /></Row1>
      <div className="flex items-start h-[62px]">
        <span className="w-[123px] h-[29px] leading-[29px] shrink-0 text-[16px] text-[#b3bbc3]">DIRECTION</span>
        <div className="h-[29px]"><Spin className="w-[149px]" value="94" faded /></div>
        <svg viewBox="0 0 64 64" className="ml-[36px] w-[64px] h-[64px] shrink-0">
          <circle cx="32" cy="32" r="30" fill="#2e4259" stroke="#1d2733" strokeWidth="3" />
          <path d="M32 33H57" stroke="#141c26" strokeWidth="2" />
          <path d="M51 29l7 4-7 4z" fill="#141c26" />
        </svg>
        <div className="flex items-center self-center ml-[18px]">
          <Chk />
          <span className="ml-[11px] text-[17px] text-[#b3bbc3]">CAP</span>
        </div>
      </div>
    </div>
    <div className="pl-[19px] mt-[11px] grid grid-cols-[273.5px_1fr] gap-y-[10px]">
      <CheckLine label="MASQUÉ SUR CARTE" w="w-[220px]" />
      <CheckLine label="MAÎTRE DU JEU SEULEMENT" w="w-[224px]" />
      <CheckLine label="MASQUÉ SUR PLANIFICATION" w="w-[220px]" />
      <CheckLine label="LE JOUEUR PEUT CONDUIRE" on w="w-[224px]" />
      <CheckLine label="CACHÉ SUR MFD" w="w-[220px]" />
      <CheckLine label="COLD AT START" w="w-[224px]" />
      <CheckLine label="ACTIVATION RETARDÉE" w="w-[220px]" />
      <CheckLine label="Avt. ACTIVATION VISIBLE" w="w-[224px]" />
    </div>
    <div className="mt-[62px] h-[43px] bg-[#213040] flex items-start pt-[4px] shrink-0">
      <div className="w-[8px] h-[39px] bg-[#ff6464]" />
      <div className="w-[52px] h-[39px] bg-[#2d3e50] flex items-center justify-center text-[#d4d9de]">
        <svg viewBox="0 0 30 24" className="w-[30px] h-[24px]" fill="none" stroke="currentColor" strokeWidth="2">
          <circle cx="15" cy="5" r="3" /><circle cx="4" cy="19" r="3" /><circle cx="26" cy="19" r="3" /><path d="M13 8L6 16M17 8l7 8" />
        </svg>
      </div>
      <div className="w-[8px] h-[36px] bg-[#eaa23a]" />
      <div className="w-[52px] h-[36px] bg-[#2d3e50] flex items-center justify-center text-[#7e8b97]">
        <svg viewBox="0 0 26 24" className="w-[26px] h-[24px]" fill="none" stroke="currentColor" strokeWidth="2.5">
          <path d="M3 3l6 5M23 3l-6 5M3 21l6-5M23 21l-6-5M8 4L4 8M18 4l4 4M8 20l-4-4M18 20l4-4" /><circle cx="13" cy="12" r="2.5" />
        </svg>
      </div>
      <div className="w-[8px] h-[36px] bg-[#e2da45]" />
      <div className="w-[52px] h-[36px] bg-[#2d3e50] flex items-center justify-center text-[#7e8b97]"><Command size={26} strokeWidth={1.6} /></div>
      <div className="w-[8px] h-[36px] bg-[#5fd96b]" />
      <div className="w-[52px] h-[36px] bg-[#2d3e50] flex items-center justify-center text-[#7e8b97]"><Sigma size={24} strokeWidth={3} /></div>
    </div>
    <div className="pl-[23px] pt-[14px] flex flex-col gap-[7px]">
      <Row2 label="PNT NAV">
        <div className="w-[29.5px] flex justify-center text-[#5a8cc8]"><ChevronLeft size={36} strokeWidth={2} className="shrink-0" /></div>
        <Sel className="w-[135px]" value="0" dim={false} small />
        <div className="w-[30px] flex justify-center text-[#5a8cc8]"><ChevronRight size={36} strokeWidth={2} className="shrink-0" /></div>
        <span className="ml-[14px] w-[66px] text-[16px] text-[#b3bbc3]">DE</span>
        <Box className="w-[136px]">19</Box>
      </Row2>
      <Row2 label="NOM"><Box className="w-[410.5px]" /></Row2>
      <Row2 label="TYPE">
        <Sel className="w-[149.5px]" value="Sur route" small />
        <span className="ml-[20.5px] w-[91px] text-[16px] text-[#76828e]">MODÈLES</span>
        <Sel className="w-[149.5px]" value="" small />
      </Row2>
      <Row2 label="ALTITUDE">
        <Spin className="w-[119.5px]" value="141" faded />
        <span className="ml-[12px] text-[16px] text-[#b3bbc3]">ft</span>
      </Row2>
      <Row2 label="VITESSE">
        <Spin className="w-[119.5px]" value="24" />
        <span className="ml-[14px] w-[133px] text-[16px] text-[#b3bbc3]">kts</span>
        <span className="w-[116.5px] text-[16px] text-[#b3bbc3]">GS</span>
        <Chk on className="w-[26px] h-[26px]" />
      </Row2>
      <Row2 label="DÉPART">
        <div className="h-full flex items-center">
          <Box className="w-[44.5px]">5</Box>
          <span className="w-[18.5px] text-center text-[#b3bbc3] text-[16px]">:</span>
          <Box className="w-[44.5px]">40</Box>
          <span className="w-[18.5px] text-center text-[#b3bbc3] text-[16px]">:</span>
          <Box className="w-[44.5px]">0</Box>
          <span className="w-[18.5px] text-center text-[#6d7883] text-[16px]">/</span>
          <Box className="w-[44.5px]">0</Box>
        </div>
        <span className="ml-[27.5px] w-[122.5px] text-[16px] text-[#b3bbc3]">Heure fixe</span>
        <Chk on className="w-[27px] h-[26px]" />
      </Row2>
      <div className="flex h-[30px] pl-[128px] gap-[3.5px] text-[16px]">
        <Btn className="w-[135px]">AJOUT</Btn>
        <div className="w-[135px] h-full flex items-center justify-center border-2 border-[#34495f] font-bold text-[#5fd0ef] rounded-[2px]">ÉDITER</div>
        <Btn className="w-[135px]">SUPPR</Btn>
      </div>
      <div className="h-[30px] pl-[128px] text-[16px] -mt-px">
        <Btn className="w-[412px]">AVANCÉ</Btn>
      </div>
    </div>
    <div className="mt-auto mb-[8px] ml-[19px] w-[542px] h-[29px] border-2 border-[#3a5169] rounded-[2px] bg-[#2f435a] flex items-center justify-center text-[16px] font-bold text-[#5fd0ef]">
      ADVANCED WP AUTO FILL
    </div>
  </div>
);

const COLS = ["w-[601px]", "w-[602px]", "w-[166px]", "w-[136px]", "w-[152px]", "w-[151px]", "w-[152px]", "w-[257px]"];
const HEADERS = ["NOM GROUPE", "NOM", "TYPE UNITÉ", "ID UNITÉ", "PAYS", "NIVEAU", "ÉTAT", "MODULE"];
const ROWS = [
  ["Aerial-1", "Aerial-1-1", "A-10C II", "350", "USA", "Joueur", ""],
  ["Anapa AAA 1", "Unit #001", "AAA Vulcan M163", "49", "USA", "Moyen", ""],
  ["Anapa AAA 1", "Unit #002", "AAA Vulcan M163", "50", "USA", "Moyen", ""],
  ["Anapa AAA 1", "Unit #003", "AAA Vulcan M163", "51", "USA", "Moyen", ""],
  ["Anapa AAA 1", "Unit #004", "AAA Vulcan M163", "52", "USA", "Moyen", ""],
  ["Anapa Aircraft #001", "Anapa Aircraft #001", "B-52H", "128", "USA", "", "CACHÉ"],
  ["Anapa Aircraft #002", "Anapa Aircraft #002", "B-52H", "126", "USA", "", "CACHÉ"],
  ["Anapa Aircraft #005", "Anapa Aircraft #005", "B-52H", "24", "USA", "", "CACHÉ"],
  ["Anapa Aircraft #007", "Anapa Aircraft #007", "B-1B", "30", "USA", "", "CACHÉ"],
  ["Anapa Aircraft #009", "Anapa Aircraft #009", "B-1B", "31", "USA", "", "CACHÉ"],
];

const UnitTable = () => (
  <div className="ml-[12px] mt-[18px] w-[3167px] flex-1 min-h-0 flex border-t-2 border-[#1d2733] overflow-hidden">
    <div className="w-[3150px] flex flex-col">
      <div className="h-[26.5px] shrink-0 flex bg-[#434f5c] text-[#e6e8ea] text-[16.5px]">
        {HEADERS.map((h, i) => (
          <div key={h} className={`${COLS[i]} shrink-0 h-full bg-[#5f6673] border-r border-[#39424e] flex items-center justify-center relative`}>
            {h}
            {i === 0 && <ChevronDown size={14} className="absolute right-[6px] rotate-180 text-[#b5bac0]" />}
          </div>
        ))}
      </div>
      {ROWS.map((r, i) => (
        <div
          key={i}
          className={`h-[31.4px] shrink-0 flex text-[16.5px] ${i === 1 ? "bg-[#47697c] text-[#c9d1d6]" : i % 2 === 0 ? "bg-[#1e2936] text-[#d6dade]" : "bg-[#39434f] text-[#c3c8cc]"}`}
        >
          {r.map((c, k) => (
            <div key={k} className={`${COLS[k]} shrink-0 h-full border-r border-[#39424e] flex items-center pl-[9px] whitespace-nowrap`}>{c}</div>
          ))}
          <div className={`${COLS[7]} shrink-0 h-full border-r border-[#39424e]`} />
        </div>
      ))}
    </div>
    <div className="w-[17px] bg-[#30343a] flex flex-col items-center shrink-0">
      <div className="mt-[6px] w-0 h-0 border-x-[4px] border-x-transparent border-b-[8px] border-b-[#9aa0a6]" />
      <div className="mt-[5px] w-[8px] h-[50px] bg-[#a0a5aa]" />
      <div className="mt-auto mb-[4px] w-0 h-0 border-x-[4px] border-x-transparent border-t-[8px] border-t-[#9aa0a6]" />
    </div>
  </div>
);

const CHECKS = ["Hélicoptère", "Avions", "Véhicules", "Navires", "Obj. statiqu"];
const COUNTS = ["0", "1", "45", "0", "10"];
const Yellow = ({ v }) => (
  <div className="w-[51px] h-[30px] border border-[#f4d33a] border-t-[3px] flex items-center justify-center text-[16px] text-[#e0bf3a]">{v}</div>
);

const UnitsPanel = () => (
  <div className="h-[524px] shrink-0 flex flex-col">
    <div className="h-[44px] shrink-0 border-b border-[#243342] flex items-center justify-between pl-[23px] pr-[22px]">
      <span className="text-[17px] font-bold text-[#5fd0ef]">LISTE UNITÉS</span>
      <X size={18} className="text-[#6f7f8f]" />
    </div>
    <div className="pl-[23px] pt-[15px] flex flex-col">
      <div className="h-[30px] flex items-start">
        <Chk on />
        <span className="ml-[11px] mt-[3px] w-[461px] text-[17px] text-[#c3c8cd]">Afficher Unités Cachées</span>
        <div className="mt-[3px] w-[30px] h-[30px] bg-[#1f2a38] border border-[#34495f] flex flex-col items-center justify-center gap-px">
          <div className="w-[9px] h-[11px] rounded-full bg-[#f0f2f4]" />
          <div className="w-[18px] h-[10px] rounded-t-[6px] bg-[#f0f2f4]" />
        </div>
      </div>
      <div className="mt-[15.5px] h-[29px] grid grid-cols-[163px_165px_165px_165px_165px_198px] items-start">
        {CHECKS.map((c) => (
          <div key={c} className="flex items-center h-[26px]">
            <Chk on />
            <span className="ml-[11px] text-[17px] text-[#c3c8cd]">{c}</span>
          </div>
        ))}
        <Sel className="w-[198px] !h-[29px]" value="TOUS" small />
      </div>
      <div className="mt-[15.5px] -ml-[2px] h-[30px] flex items-center">
        <div className="w-[165px]"><Yellow v={COUNTS[0]} /></div>
        <div className="w-[165px]"><Yellow v={COUNTS[1]} /></div>
        <div className="w-[165px]"><Yellow v={COUNTS[2]} /></div>
        <div className="w-[166px]"><Yellow v={COUNTS[3]} /></div>
        <div className="w-[165px]"><Yellow v={COUNTS[4]} /></div>
        <span className="w-[75.5px] text-[16px] text-[#e0bf3a]">Total:</span>
        <Yellow v="56" />
        <span className="ml-[23px] w-[47px] overflow-hidden whitespace-nowrap text-[16px] text-[#e0bf3a]">unités</span>
      </div>
    </div>
    <UnitTable />
  </div>
);

const Sep = () => <span className="w-px h-[24px] bg-[#3c4f63] shrink-0" />;
const ModeBtn = ({ children, className = "" }) => (
  <div className={`w-[50px] h-[29px] flex items-center justify-center border border-[#34495f] bg-[#1f2a38] text-[16px] font-bold text-[#d3d7da] overflow-hidden ${className}`}>{children}</div>
);

const StatusBar = () => (
  <div className="h-[44px] shrink-0 border-t-2 border-b border-black flex items-center pl-[12px] pr-[17px] text-[17px] text-[#b4bbc1] whitespace-nowrap">
    <span className="w-[52px]">DFLT</span>
    <ChevronDown size={15} className="text-[#7f8b96]" />
    <span className="ml-[111px] w-[59px]">MGRS</span>
    <Sep />
    <span className="ml-[6px] w-[189px]">37 T CK 66343 87330</span>
    <Sep />
    <span className="ml-[133px] w-[49px] text-[#d3d7da]">ALT</span>
    <span className="w-[70px]">47</span>
    <Sep />
    <span className="ml-[16px] w-[43px] text-[#d3d7da]">MD</span>
    <span className="w-[74px]">+6.5°</span>
    <Sep />
    <span className="ml-[24px] w-[129px] text-[#d3d7da]">DEPL./SELECT.</span>
    <Sep />
    <div className="ml-[368px] flex items-center">
      <ModeBtn>CARTE</ModeBtn>
      <ModeBtn className="ml-[13px]">SAT</ModeBtn>
      <ModeBtn className="ml-[13px] bg-[#5a9fd8] text-black border-[#5a9fd8]">ALT</ModeBtn>
      <ModeBtn className="ml-[48px]">
        <svg viewBox="0 0 40 20" className="w-[40px] h-[20px]"><path d="M8 3h14v14H8z" fill="#9a9d9f" /><path d="M11 6h8M11 10h8M11 14h8" stroke="#444" /><path d="M22 10h10" stroke="#9a9d9f" strokeWidth="2" /></svg>
      </ModeBtn>
      <ModeBtn className="ml-[13px]">
        <svg viewBox="0 0 24 24" className="w-[24px] h-[24px]" fill="none" stroke="#9a9d9f" strokeWidth="2"><circle cx="12" cy="12" r="7" /><path d="M12 2v4M12 18v4M2 12h4M18 12h4M12 9v3h3" /></svg>
      </ModeBtn>
    </div>
    <span className="ml-auto text-[17px] text-[#8b949c]">17.06.2024 14:33:42</span>
  </div>
);

const App = () => (
  <div className="w-[3840px] h-[2160px] flex flex-col bg-[#2d3e50] font-['DejaVu_Sans'] overflow-hidden">
    <div className="h-[60px] shrink-0 flex flex-col relative">
      <div className="h-[30px] pl-[8px] flex items-center font-['DejaVu_Sans_Mono'] text-[21.5px] text-[#0f9ed8] whitespace-nowrap">
        CAU - Blue - Airbase Anapa v2 (by Rudel_chw).miz
      </div>
      <div className="h-[28px] pl-[15px] flex items-center gap-[16.5px] text-[16px] font-bold text-white whitespace-nowrap">
        <span>FICHIER</span><span>VIEW</span><span>ÉDITION</span><span>VOL</span><span>CAMPAGNE</span><span>PERSONNALISER</span><span>GÉNÉRATEUR DE MISSION</span><span>DIVERS</span>
      </div>
      <div className="absolute right-[24px] top-[14px] flex items-center text-[#1c87a8]">
        <Wifi size={26} strokeWidth={2.5} />
        <svg viewBox="0 0 24 34" className="ml-[17px] w-[24px] h-[34px]">
          <path d="M3 6q9-7 18 0M6 10q6-4 12 0" fill="none" stroke="currentColor" strokeWidth="2" />
          <path d="M12 10l3 14 4 8H5l4-8z" fill="#1c87a8" />
        </svg>
        <X size={18} className="ml-[78px] text-[#6f7f8f]" />
      </div>
    </div>
    <div className="flex-1 min-h-0 flex">
      <LeftToolbar />
      <div className="w-[3180px] shrink-0 flex flex-col">
        <div className="flex-1 min-h-0 relative overflow-hidden">
          <MapDrawing />
          <div className="absolute left-[36px] top-[37px] flex flex-col gap-[12px] text-[16.5px] leading-[18px] font-bold text-[#ff5a5a] whitespace-nowrap">
            <span>SRS not connected</span>
            <span>Connect to an SRS server and join a mission</span>
            <span>SRS DCS settings:</span>
            <span>Options -&gt; SPECIAL -&gt; DCS-SRS</span>
            <span>Toggle (by default) with:</span>
            <span>LEFT CTRL + LEFT SHIFT + ESC</span>
          </div>
        </div>
        <UnitsPanel />
      </div>
      <RightPanel />
    </div>
    <StatusBar />
  </div>
);

export default App;
